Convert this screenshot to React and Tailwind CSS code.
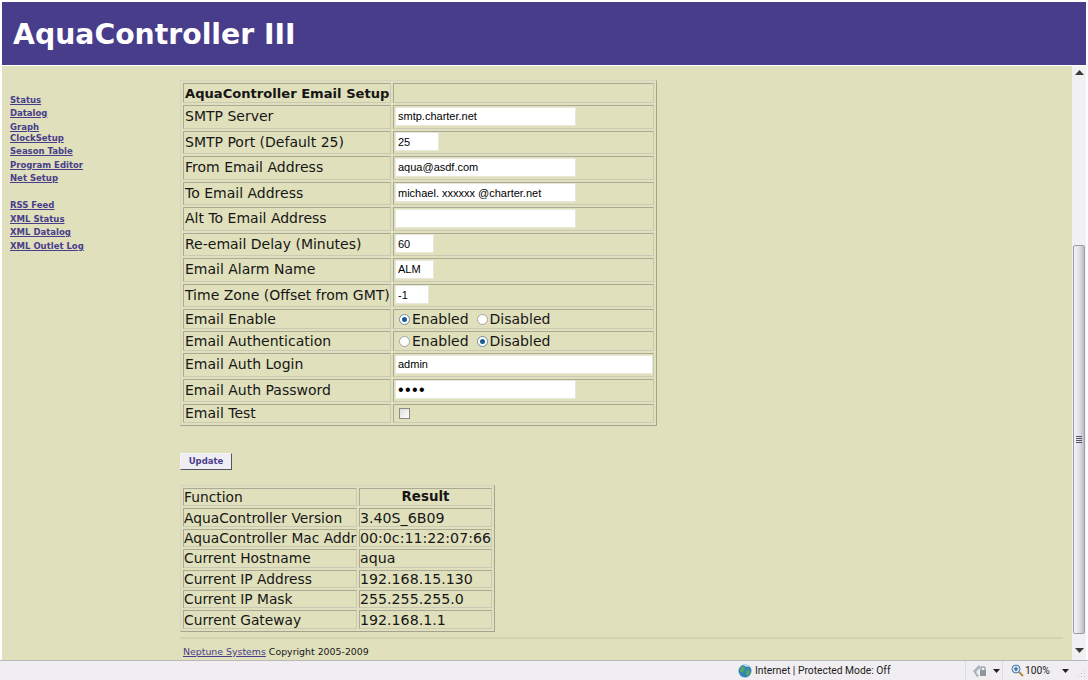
import React from "react";

const font = "font-['DejaVu_Sans',Verdana,sans-serif]";
const cell = "border border-t-[#a9a996] border-l-[#a9a996] border-b-[#c9c9b6] border-r-[#c9c9b6] p-0 pl-[1px] align-middle";
const cell2 = "border border-t-[#a9a996] border-l-[#a9a996] border-b-[#c9c9b6] border-r-[#c9c9b6] p-0 align-middle";

const nav1 = [["Status", "mb-[2.5px]"], ["Datalog", "mb-[2.5px]"], ["Graph", ""], ["ClockSetup", "mb-[2.5px]"], ["Season Table", "mb-[2.5px]"], ["Program Editor", "mb-[2.5px]"], ["Net Setup", ""]];
const nav2 = ["RSS Feed", "XML Status", "XML Datalog", "XML Outlet Log"];

function Radio({ on }) {
  return (
    <span className={`inline-flex items-center justify-center w-[11px] h-[11px] rounded-full border bg-white ${on ? "border-[#6d8aa8]" : "border-[#a5a5a5]"}`}>
      {on && <span className="block w-[5px] h-[5px] rounded-full bg-[#1c5a8c]" />}
    </span>
  );
}

function RadioPair({ first }) {
  return (
    <div className="flex items-center pl-[4px] h-full">
      <Radio on={first} />
      <span className="ml-[2px]">Enabled</span>
      <span className="ml-[8px] flex items-center">
        <Radio on={!first} />
        <span className="ml-[2px]">Disabled</span>
      </span>
    </div>
  );
}

function Field({ value, w, type = "text" }) {
  const size = type === "password" ? "text-[16px] tracking-[1.4px]" : "text-[11px]";
  return (
    <input
      type={type}
      readOnly
      value={value}
      className={`block -mt-[1px] h-[19px] bg-white px-[2px] text-black outline-none font-['Liberation_Sans',Arial,sans-serif] border border-[#e8e8d8] ${size} ${w}`}
    />
  );
}

const rows = [
  ["SMTP Server", <Field value="smtp.charter.net" w="w-[181px]" />, "h-[23.5px]"],
  ["SMTP Port (Default 25)", <Field value="25" w="w-[44px]" />, "h-[23.5px]"],
  ["From Email Address", <Field value="aqua@asdf.com" w="w-[181px]" />, "h-[23.5px]"],
  ["To Email Address", <Field value="michael. xxxxxx @charter.net" w="w-[181px]" />, "h-[23.5px]"],
  ["Alt To Email Address", <Field value="" w="w-[181px]" />, "h-[23.5px]"],
  ["Re-email Delay (Minutes)", <Field value="60" w="w-[39px]" />, "h-[23.5px]"],
  ["Email Alarm Name", <Field value="ALM" w="w-[39px]" />, "h-[23.5px]"],
  ["Time Zone (Offset from GMT)", <Field value="-1" w="w-[34px]" />, "h-[23.5px]"],
  ["Email Enable", <RadioPair first />, "h-[20px]"],
  ["Email Authentication", <RadioPair first={false} />, "h-[20px]"],
  ["Email Auth Login", <Field value="admin" w="w-[258px]" />, "h-[23.5px]"],
  ["Email Auth Password", <Field value="aqua" type="password" w="w-[181px]" />, "h-[23.5px]"],
  [
    "Email Test",
    <span className="block ml-[4px] w-[11px] h-[11px] border border-[#8a8a8a] bg-gradient-to-br from-[#dcdcdc] to-white" />,
    "h-[19px]",
  ],
];

const info = [
  ["AquaController Version", "3.40S_6B09"],
  ["AquaController Mac Addr", "00:0c:11:22:07:66"],
  ["Current Hostname", "aqua"],
  ["Current IP Address", "192.168.15.130"],
  ["Current IP Mask", "255.255.255.0"],
  ["Current Gateway", "192.168.1.1"],
];

function Scrollbar() {
  return (
    <div className="w-[14px] flex flex-col items-stretch bg-[#f1f1f4] mr-[2px]">
      <div className="h-[179px] pt-[4px] flex justify-center">
        <svg width="9" height="5" viewBox="0 0 9 5"><path d="M4.5 0 L9 5 H0 Z" fill="#3a3a3a" /></svg>
      </div>
      <div className="h-[389px] mx-[1px] rounded-[2px] border border-[#9c9ca4] bg-gradient-to-r from-[#f4f4f6] via-[#e2e2e8] to-[#bcbcc6] flex items-center justify-center">
        <div className="flex flex-col gap-[1px] w-[6px]">
          <div className="h-[1px] bg-[#55555f]" />
          <div className="h-[1px] bg-[#55555f]" />
          <div className="h-[1px] bg-[#55555f]" />
          <div className="h-[1px] bg-[#55555f]" />
        </div>
      </div>
      <div className="flex-1 flex items-center justify-center pt-[6px]">
        <svg width="9" height="5" viewBox="0 0 9 5"><path d="M0 0 H9 L4.5 5 Z" fill="#3a3a3a" /></svg>
      </div>
    </div>
  );
}

function Globe() {
  return (
    <svg width="14" height="14" viewBox="0 0 14 14">
      <circle cx="7" cy="7" r="6.5" fill="#2f86b8" />
      <path d="M3 3 C5 2 7 3 7 5 C7 6 5 6 5 8 C5 9 3 9 2 7 Z" fill="#5fa65a" />
      <path d="M9 6 C11 6 12 7 12 9 C11 11 9 12 8 11 C8 9 8 7 9 6 Z" fill="#5fa65a" />
      <path d="M5 1 C7 0.5 10 1 11 3 C9 3 7 2 5 1 Z" fill="#d3ecf6" />
    </svg>
  );
}

function Lock() {
  return (
    <svg width="16" height="14" viewBox="0 0 16 14">
      <path d="M1 7 L7 1 L9 3 L4 8 L7 12 L5 13 Z" fill="#a9b4bd" />
      <rect x="8" y="6" width="6" height="6" fill="#8d979f" />
      <path d="M9 6 V4 C9 2.5 13 2.5 13 4 V6" fill="none" stroke="#8d979f" strokeWidth="1.2" />
    </svg>
  );
}

function Caret() {
  return (
    <svg width="7" height="4" viewBox="0 0 7 4"><path d="M0 0 H7 L3.5 4 Z" fill="#222" /></svg>
  );
}

function Zoom() {
  return (
    <svg width="13" height="13" viewBox="0 0 13 13">
      <circle cx="5" cy="5" r="4" fill="#cfe3f5" stroke="#4a78a8" />
      <path d="M3 5 H7 M5 3 V7" stroke="#2b5d92" strokeWidth="1.2" />
      <path d="M8 8 L12 12" stroke="#b08a4a" strokeWidth="2" />
    </svg>
  );
}

function Grip() {
  return (
    <svg width="9" height="9" viewBox="0 0 9 9" className="self-end mb-[2px] mr-[2px]">
      <g fill="#c4c4c4">
        <rect x="7" y="1" width="1" height="1" />
        <rect x="4" y="4" width="1" height="1" />
        <rect x="7" y="4" width="1" height="1" />
        <rect x="1" y="7" width="1" height="1" />
        <rect x="4" y="7" width="1" height="1" />
        <rect x="7" y="7" width="1" height="1" />
      </g>
    </svg>
  );
}

export default function App() {
  return (
    <div className={`w-[1088px] h-[680px] overflow-hidden flex flex-col bg-[#f0eef0] text-[#161616] ${font}`}>
      <div className="h-[66px] shrink-0 pt-[2px] px-[2px] bg-white">
        <header className="h-[63px] bg-[#483d8b] pl-[11px] pt-[4px] flex items-center">
          <h1 className="text-[28.3px] leading-none font-bold text-white">AquaController III</h1>
        </header>
      </div>

      <div className="flex h-[594px] shrink-0 bg-white pl-[2px]">
        <div className="flex flex-1 bg-[#e0e0bc] min-w-0">
          <aside className="w-[178px] pl-[8px] pt-[28.5px] shrink-0">
            <nav className="flex flex-col text-[8.5px] leading-[11px] font-bold text-[#483d8b]">
              {nav1.map(([t, m]) => (
                <a key={t} className={`underline ${m}`}>{t}</a>
              ))}
              <div className="h-[16px]" />
              {nav2.map((t) => (
                <a key={t} className="underline mb-[2.6px]">{t}</a>
              ))}
            </nav>
          </aside>

          <main className="flex-1 min-w-0 pt-[14px] pr-[9px]">
            <table className="border-separate border-spacing-[2px] border border-t-[#d4d4c2] border-l-[#d4d4c2] border-b-[#a3a390] border-r-[#a3a390] text-[14px] leading-[17px] w-[477px] table-fixed">
              <tbody>
                <tr className="h-[20px]">
                  <td className={`${cell} font-bold text-[13.1px] pl-[1px] w-[208px] whitespace-nowrap`}>AquaController Email Setup</td>
                  <td className={cell}></td>
                </tr>
                {rows.map(([label, control, h]) => (
                  <tr key={label} className={h}>
                    <td className={`${cell} whitespace-nowrap`}>{label}</td>
                    <td className={cell}>{control}</td>
                  </tr>
                ))}
              </tbody>
            </table>

            <button className="block mt-[27px] w-[52px] h-[17px] bg-[#eeeef4] border border-t-[#f4f4f8] border-l-[#f4f4f8] border-b-[#55555f] border-r-[#55555f] text-[8.5px] leading-none font-bold text-[#483d8b]">
              Update
            </button>

            <table className="mt-[15px] border-separate border-spacing-[2px] border border-t-[#d4d4c2] border-l-[#d4d4c2] border-b-[#a3a390] border-r-[#a3a390] text-[13.8px] leading-[16px] w-[315px] table-fixed">
              <tbody>
                <tr className="h-[18.4px]">
                  <td className={`${cell2} w-[174px]`}>Function</td>
                  <td className={`${cell2} font-bold text-center text-[13.4px]`}>Result</td>
                </tr>
                {info.map(([a, b]) => (
                  <tr key={a} className="h-[18.4px]">
                    <td className={`${cell2} whitespace-nowrap`}>{a}</td>
                    <td className={`${cell2} whitespace-nowrap text-[14.2px]`}>{b}</td>
                  </tr>
                ))}
              </tbody>
            </table>

            <div className="mt-[5px] border-t-2 border-[#d2d2ae] pt-[7px] pl-[3px] text-[9.4px] leading-[12px]">
              <a className="underline text-[#483d8b]">Neptune Systems</a>
              <span> Copyright 2005-2009</span>
            </div>
          </main>
        </div>
        <Scrollbar />
      </div>

      <footer className="flex-1 border-t border-[#b9b9b9] bg-[#f0eef0] flex items-center text-[10.3px] text-[#222] font-['Roboto',sans-serif]">
        <div className="ml-[738px] flex items-center gap-[3px] w-[227px]">
          <Globe />
          <span>Internet | Protected Mode: Off</span>
        </div>
        <div className="w-[37px] h-full border-l border-[#dcdcdc] flex items-center pl-[6px] gap-[5px]">
          <Lock />
          <Caret />
        </div>
        <div className="h-full border-l border-[#dcdcdc] flex items-center pl-[8px]">
          <Zoom />
          <span className="ml-[1px]">100%</span>
          <span className="ml-[12px]"><Caret /></span>
        </div>
        <div className="flex-1 h-full flex justify-end"><Grip /></div>
      </footer>
    </div>
  );
}
